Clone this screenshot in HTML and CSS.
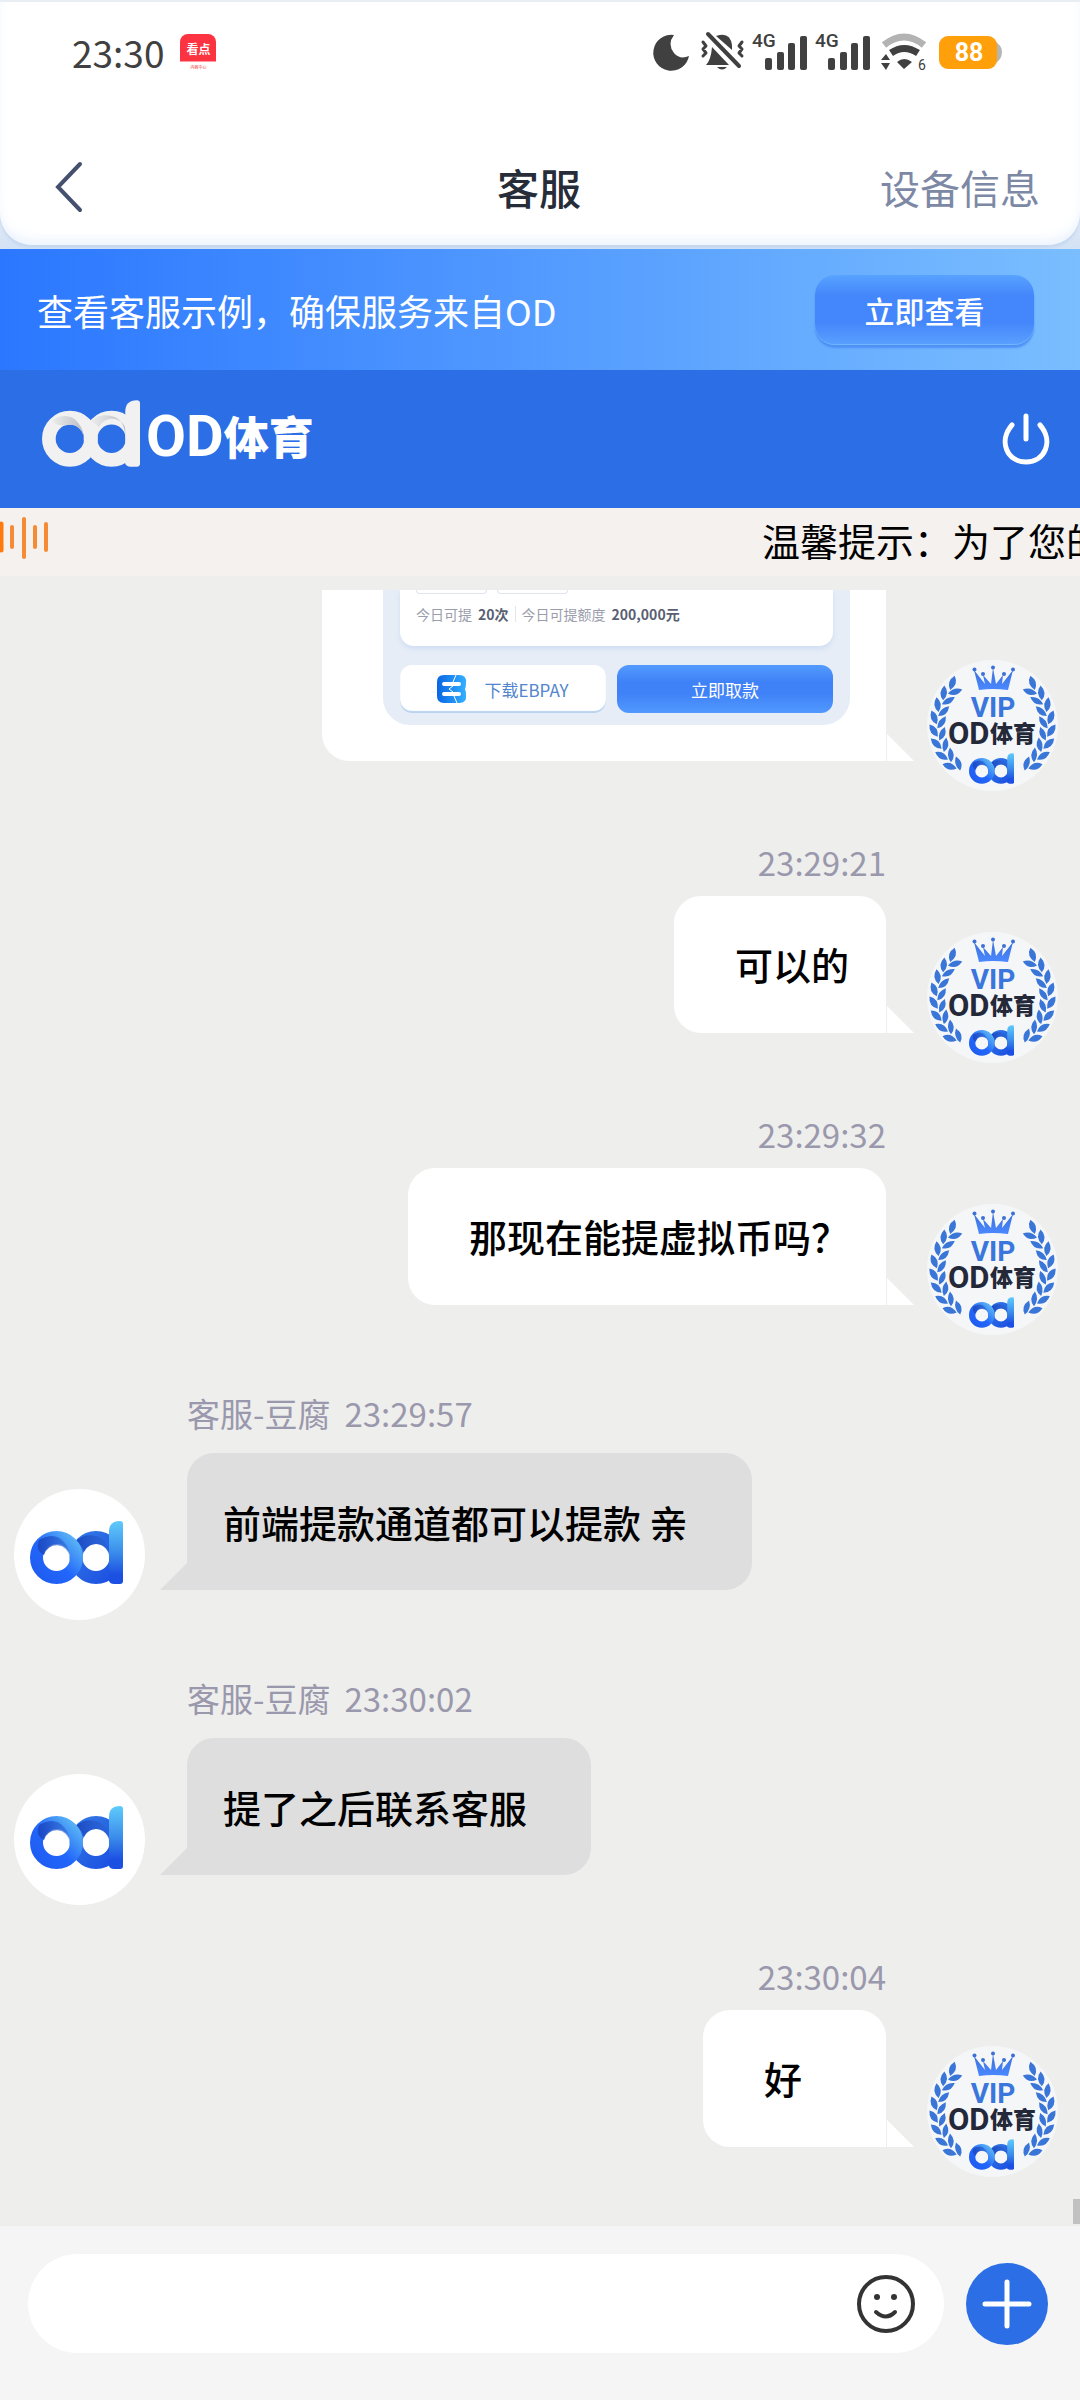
FILE: index.html
```html
<!DOCTYPE html>
<html lang="zh-CN">
<head>
<meta charset="utf-8">
<meta name="viewport" content="width=device-width">
<title>客服</title>
<link rel="stylesheet" href="styles.css">
</head>
<body>
<svg class="defs" width="0" height="0" aria-hidden="true">
  <defs>
    <linearGradient id="ring" x1="0" y1="1" x2="1" y2="0"><stop offset="0" stop-color="#1f5cf0"/><stop offset=".45" stop-color="#2266fb"/><stop offset="1" stop-color="#5db9f4"/></linearGradient>
    <linearGradient id="bowl" x1="0" y1="0" x2="1" y2="1"><stop offset="0" stop-color="#3277e4"/><stop offset="1" stop-color="#1c50e2"/></linearGradient>
    <linearGradient id="stem" x1="0" y1="0" x2="0" y2="1"><stop offset="0" stop-color="#5fcbfb"/><stop offset=".5" stop-color="#3a8cea"/><stop offset=".85" stop-color="#1c50e2"/></linearGradient>
    <linearGradient id="fold" x1="0" y1="0" x2="1" y2="0"><stop offset="0" stop-color="#1c49c4"/><stop offset="1" stop-color="#2a62d0" stop-opacity=".5"/></linearGradient>
    <linearGradient id="fold-light" x1="0" y1="0" x2="1" y2="0"><stop offset="0" stop-color="#ededed"/><stop offset="1" stop-color="#b9bdc5"/></linearGradient>
    <linearGradient id="crown" x1="0" y1="0" x2="0" y2="1"><stop offset="0" stop-color="#3a70d8"/><stop offset="1" stop-color="#4b88ff"/></linearGradient>
    <linearGradient id="eb" x1="0" y1="0" x2="1" y2="0"><stop offset="0" stop-color="#0a66e4"/><stop offset="1" stop-color="#33b0ff"/></linearGradient>
  </defs>
  <symbol id="od" viewBox="0 0 93 63">
    <circle cx="66" cy="36.500" r="20" fill="none" stroke="url(#bowl)" stroke-width="13"/>
    <path d="M46 20Q54 12 66 15Q79 18 79 36A13 13 0 0 0 54 31Q52 24 46 20Z" fill="url(#fold)"/>
    <path d="M79 11Q79 0 90 0Q93 0 93 3V60Q93 63 90 63H84Q80 63 79 60Z" fill="url(#stem)"/>
    <circle cx="26.500" cy="36.500" r="20" fill="none" stroke="url(#ring)" stroke-width="13"/>
    <path d="M9 19Q25 10 34 21Q40 28 39.500 36A13 13 0 0 0 14 34Q5 30 9 19Z" fill="url(#fold)"/>
  </symbol>
  <symbol id="od-light" viewBox="0 0 93 63">
    <circle cx="66" cy="36.500" r="20" fill="none" stroke="#f1f1f1" stroke-width="13"/>
    <path d="M46 20Q54 12 66 15Q79 18 79 36A13 13 0 0 0 54 26Q52 22 46 20Z" fill="url(#fold-light)"/>
    <path d="M79 11Q79 0 90 0Q93 0 93 3V60Q93 63 90 63H84Q80 63 79 60Z" fill="#f1f1f1"/>
    <circle cx="26.500" cy="36.500" r="20" fill="none" stroke="#f1f1f1" stroke-width="13"/>
    <path d="M9 19Q25 10 34 21Q40 28 39.500 36A13 13 0 0 0 22 24Q12 24 9 19Z" fill="url(#fold-light)"/>
  </symbol>
  <symbol id="leaves" viewBox="0 0 131 131">
    <path d="M10 71Q1 68 3 58Q12 61 10 71ZM11 75Q10 66 18 62Q20 72 11 75Z" fill="#3a76d8"/>
  </symbol>
  <symbol id="laurel" viewBox="0 0 131 131">
    <use href="#leaves" width="131" height="131" transform="rotate(46 65 66)"/>
    <use href="#leaves" width="131" height="131" transform="rotate(33 65 66)"/>
    <use href="#leaves" width="131" height="131" transform="rotate(20 65 66)"/>
    <use href="#leaves" width="131" height="131" transform="rotate(7 65 66)"/>
    <use href="#leaves" width="131" height="131" transform="rotate(-6 65 66)"/>
    <use href="#leaves" width="131" height="131" transform="rotate(-19 65 66)"/>
    <use href="#leaves" width="131" height="131" transform="rotate(-32 65 66)"/>
    <use href="#leaves" width="131" height="131" transform="rotate(-45 65 66)"/>
  </symbol>
  <symbol id="vip" viewBox="0 0 131 131">
    <circle cx="65.500" cy="65.500" r="65.500" fill="#f5f6f8"/>
    <use href="#laurel" width="131" height="131"/>
    <use href="#laurel" width="131" height="131" transform="translate(131 0) scale(-1 1)"/>
    <path d="M52 30L47 10L58 24L56 15L64 24L66 8L69 24L76 15L75 24L86 10L81 30Q66 28 52 30Z" fill="url(#crown)"/>
    <g fill="#3a70d8"><circle cx="47.500" cy="9.500" r="2"/><circle cx="56" cy="14" r="2"/><circle cx="66" cy="7.500" r="2"/><circle cx="77" cy="14" r="2"/><circle cx="86" cy="9.500" r="2"/></g>
    <use href="#od" x="42" y="93" width="45" height="31"/>
  </symbol>
  <symbol id="bars" viewBox="0 0 55 40">
    <g fill="#404040"><rect x="13" y="26" width="7" height="12" rx="2"/><rect x="25" y="20" width="7" height="18" rx="2"/><rect x="36" y="11" width="7" height="27" rx="2"/><rect x="48" y="4" width="7" height="34" rx="2"/></g>
  </symbol>
</svg>

<header class="top">
  <div class="top-card">
    <div class="status">
      <div class="status-left">
        <span class="clock">23:30</span>
        <span class="app"><span class="app-name">看点</span><span class="app-sub">内容中心</span></span>
      </div>
      <div class="status-right">
        <svg width="37" height="40" viewBox="0 0 37 40"><path d="M19 3A18 18 0 1 0 34 24Q25 28 19 21Q12 12 19 3Z" fill="#404040"/></svg>
        <svg width="44" height="40" viewBox="0 0 44 40"><path d="M12 15L29 33H6Q11 28 12 15ZM16 4Q30 -1 32 13V18Z" fill="#404040"/><path d="M17 35H27Q22 40 17 35Z" fill="#404040"/><path d="M8 2L39 34" fill="none" stroke="#404040" stroke-width="4" stroke-linecap="round"/><path d="M3 10L6 14L3 17L6 21L3 24M42 10L39 14L42 17L39 21L42 24" fill="none" stroke="#404040" stroke-width="3" stroke-linejoin="round" stroke-linecap="round"/></svg>
        <svg width="55" height="40"><use href="#bars"/><text class="net" x="0" y="15">4G</text></svg>
        <svg width="55" height="40"><use href="#bars"/><text class="net" x="0" y="15">4G</text></svg>
        <svg width="53" height="40" viewBox="-3 0 53 40"><path d="M3 13Q23 -3 43 13" fill="none" stroke="#b3b3b3" stroke-width="7"/><path d="M10 21Q23 12 37 21" fill="none" stroke="#404040" stroke-width="7"/><path d="M16 30Q23 24 31 30L23 37ZM0 28L5 22L9 28ZM0 31H9L5 38Z" fill="#404040"/><text class="wifi-gen" x="37" y="38">6</text></svg>
        <svg width="63" height="40" viewBox="0 0 63 40"><path d="M55 9Q63 13 63 20Q63 28 55 32Z" fill="#b5b5b5"/><rect x="0" y="4" width="58" height="33" rx="9" fill="#ff9f0a"/><text class="battery" x="30" y="29" text-anchor="middle">88</text></svg>
      </div>
    </div>
    <nav class="nav">
      <button class="back" aria-label="返回"><svg width="30" height="52" viewBox="0 0 30 52"><path d="M26 3L4 26L26 49" fill="none" stroke="#454f6e" stroke-width="4" stroke-linecap="round"/></svg></button>
      <h1 class="title">客服</h1>
      <a class="device" href="#device">设备信息</a>
    </nav>
  </div>
</header>

<div class="banner">
  <span>查看客服示例，确保服务来自OD</span>
  <button class="view">立即查看</button>
</div>

<div class="brand">
  <div class="logo">
    <svg width="98" height="67"><use href="#od-light"/></svg>
    <span class="logo-latin">OD</span><span class="logo-han">体育</span>
  </div>
  <button class="power" aria-label="退出"><svg width="50" height="54" viewBox="0 0 50 54"><path d="M25 4V27M11 13C-3 29 6 50 25 50S53 29 39 13" fill="none" stroke="#fff" stroke-width="5" stroke-linecap="round"/></svg></button>
</div>

<div class="notice">
  <svg width="50" height="44" viewBox="0 0 50 44"><path d="M1 8V34" stroke="#ff7a0c" stroke-width="5" stroke-linecap="round"/><path d="M12 11V31M24 3V41M35 11V31M46 8V34" stroke="#f68b36" stroke-width="4" stroke-linecap="round"/></svg>
  <span class="notice-text">温馨提示：为了您的</span>
</div>

<main class="chat">
  <article class="msg mine first">
    <div class="bubble shot">
      <div class="sheet">
        <div class="panel">
          <div class="chips"><i></i><i></i></div>
          <p class="quota"><span>今日可提</span><b>20次</b><i></i><span>今日可提额度</span><b>200,000元</b></p>
        </div>
        <div class="actions">
          <button class="download"><svg width="30" height="28" viewBox="0 0 30 28"><path d="M7 0H22Q30 0 29 8Q29 12 28 14Q29 16 29 20Q30 28 22 28H7Q0 28 0 21V7Q0 0 7 0Z" fill="url(#eb)"/><path d="M7 9H22M7 19H22" stroke="#fff" stroke-width="4" stroke-linecap="round"/><path d="M19 0L16 7M16 11L12 14L16 17M17 21L20 28" fill="none" stroke="#fff" stroke-width="1"/></svg>下载EBPAY</button>
          <button class="withdraw">立即取款</button>
        </div>
      </div>
    </div>
    <svg class="avatar"><use href="#vip"/><text class="vip-word" x="66" y="57" text-anchor="middle">VIP</text><text class="vip-latin" x="21" y="84">OD</text><text class="vip-han" x="63" y="82">体育</text></svg>
  </article>

  <article class="msg mine">
    <time class="meta">23:29:21</time>
    <p class="bubble">可以的</p>
    <svg class="avatar"><use href="#vip"/><text class="vip-word" x="66" y="57" text-anchor="middle">VIP</text><text class="vip-latin" x="21" y="84">OD</text><text class="vip-han" x="63" y="82">体育</text></svg>
  </article>

  <article class="msg mine">
    <time class="meta">23:29:32</time>
    <p class="bubble">那现在能提虚拟币吗？</p>
    <svg class="avatar"><use href="#vip"/><text class="vip-word" x="66" y="57" text-anchor="middle">VIP</text><text class="vip-latin" x="21" y="84">OD</text><text class="vip-han" x="63" y="82">体育</text></svg>
  </article>

  <article class="msg agent">
    <div class="meta"><span>客服-豆腐</span><time>23:29:57</time></div>
    <p class="bubble">前端提款通道都可以提款 亲</p>
    <div class="avatar"><svg width="93" height="63"><use href="#od"/></svg></div>
  </article>

  <article class="msg agent">
    <div class="meta"><span>客服-豆腐</span><time>23:30:02</time></div>
    <p class="bubble">提了之后联系客服</p>
    <div class="avatar"><svg width="93" height="63"><use href="#od"/></svg></div>
  </article>

  <article class="msg mine">
    <time class="meta">23:30:04</time>
    <p class="bubble">好</p>
    <svg class="avatar"><use href="#vip"/><text class="vip-word" x="66" y="57" text-anchor="middle">VIP</text><text class="vip-latin" x="21" y="84">OD</text><text class="vip-han" x="63" y="82">体育</text></svg>
  </article>
  <span class="thumb"></span>
</main>

<footer class="composer">
  <div class="field">
    <input type="text" aria-label="输入消息">
    <button class="emoji" aria-label="表情"><svg width="58" height="58" viewBox="0 0 58 58"><circle cx="29" cy="29" r="27" fill="none" stroke="#333" stroke-width="4"/><circle cx="20" cy="22" r="3" fill="#333"/><circle cx="37" cy="22" r="3" fill="#333"/><path d="M19 37Q29 46 38 37" fill="none" stroke="#333" stroke-width="4" stroke-linecap="round"/></svg></button>
  </div>
  <button class="add" aria-label="更多"><svg width="50" height="50" viewBox="0 0 50 50"><path d="M25 3V47M3 25H47" stroke="#fff" stroke-width="5" stroke-linecap="round"/></svg></button>
</footer>
</body>
</html>
```
FILE: styles.css
```css
* { box-sizing: border-box; }

body {
  margin: 0;
  min-height: 100vh;
  display: flex;
  flex-direction: column;
  background: #eeeeec;
  font-family: "Noto Sans CJK SC", sans-serif;
  overflow-x: hidden;
}

button {
  border: 0;
  padding: 0;
  background: none;
  font-family: inherit;
}

svg { display: block; flex: none; }
p, h1 { margin: 0; }
i { font-style: normal; }
.defs { position: absolute; }

/* status bar and title */
.top {
  background: linear-gradient(#e8eef4 0 80%, #d3e2f5);
  padding: 2px 0 4px;
}

.top-card {
  background: #fff;
  border-radius: 0 0 32px 32px;
  box-shadow: inset 0 -8px 14px -4px #e8f1fd, 0 3px 3px #c5d8f0;
}

.status {
  height: 100px;
  padding: 0 78px 0 72px;
  display: flex;
  align-items: center;
  justify-content: space-between;
}

.status-left { display: flex; align-items: center; gap: 16px; }
.status-right { display: flex; align-items: center; gap: 8px; }
.clock { font-size: 37px; line-height: 52px; color: #404040; }

.app {
  width: 36px;
  height: 36px;
  border-radius: 8px;
  background: linear-gradient(#fc3340 0 27px, #fff 28px);
  display: flex;
  flex-direction: column;
  align-items: center;
}

.app-name { font-size: 12px; line-height: 30px; font-weight: 700; color: #fff; }
.app-sub { font-size: 4px; line-height: 6px; color: #e33; white-space: nowrap; }
.net { font: 500 19px Roboto, sans-serif; fill: #404040; }
.wifi-gen { font: 14px Roboto, sans-serif; fill: #404040; }
.battery { font: 700 25px Roboto, sans-serif; fill: #fff; }

.status-right svg { overflow: visible; }

.nav {
  margin-top: 27px;
  height: 116px;
  padding: 0 40px 0 54px;
  display: flex;
  align-items: center;
}

.back { width: 144px; }
.title { flex: 1; text-align: center; font-size: 42px; line-height: 60px; font-weight: 500; color: #262c38; }
.device { font-size: 40px; line-height: 60px; color: #7d88a5; text-decoration: none; }

/* blue bars */
.banner {
  height: 121px;
  padding: 0 46px 0 37px;
  display: flex;
  align-items: center;
  justify-content: space-between;
  background: linear-gradient(90deg, #2b77ff, #7abeff);
  color: #fff;
  font-size: 36px;
}

.view {
  width: 219px;
  height: 69px;
  border-radius: 20px;
  background: linear-gradient(#58a2ff, #4486fb 30%, #4486fb 68%, #599ffe);
  box-shadow: 0 1px 0 #72b5ff, 0 4px 2px #4e91f5;
  color: #fff;
  font-size: 30px;
  font-weight: 500;
}

.brand {
  height: 138px;
  padding: 0 29px 0 42px;
  display: flex;
  align-items: center;
  justify-content: space-between;
  background: #2b6ee6;
}

.logo { display: flex; align-items: center; margin-bottom: 6px; color: #fff; }
.logo svg { margin-bottom: 6px; }
.logo-latin { margin-left: 6px; font: 700 58px/70px Roboto, sans-serif; }
.logo-han { font-size: 45px; line-height: 70px; font-weight: 900; }

.notice {
  height: 68px;
  display: flex;
  align-items: center;
  justify-content: space-between;
  background: #f5f1ee;
  overflow: hidden;
}

.notice svg { margin-bottom: 8px; }
.notice-text { flex: none; width: 318px; white-space: nowrap; font-size: 38px; line-height: 64px; margin-bottom: 4px; color: #000; }

/* conversation */
.chat {
  flex: 1;
  position: relative;
  padding: 14px 22px 79px 14px;
}

.msg { display: grid; column-gap: 42px; }

.mine {
  grid-template-columns: 1fr 131px;
  justify-items: end;
  column-gap: 41px;
  margin-top: 77px;
}

.agent {
  grid-template-columns: 131px 1fr;
  justify-items: start;
  margin-top: 84px;
}

.meta { font-size: 33px; line-height: 48px; color: #9a98ac; }
.mine .meta { grid-column: 1; margin-bottom: 10px; }
.agent .meta { grid-column: 2; margin-bottom: 16px; display: flex; gap: 14px; }

.bubble {
  position: relative;
  min-width: 183px;
  border-radius: 27px;
  font-size: 38px;
  line-height: 57px;
  font-weight: 500;
  color: #000;
}

.mine .bubble {
  grid-column: 1;
  grid-row: 2;
  padding: 39px 37px 41px 61px;
  border-bottom-right-radius: 0;
  background: #fff;
}

.agent .bubble {
  grid-column: 2;
  grid-row: 2;
  padding: 40px 64px 40px 36px;
  border-bottom-left-radius: 0;
  background: #dedede;
}

.bubble::after {
  content: "";
  position: absolute;
  bottom: 0;
  width: 27px;
  height: 27px;
}

.mine .bubble::after { left: calc(100% + 1px); background: #fff; clip-path: polygon(0 0, 100% 100%, 0 100%); }
.agent .bubble::after { right: 100%; background: #dedede; clip-path: polygon(100% 0, 100% 100%, 0 100%); }

.avatar {
  grid-row: 2;
  align-self: end;
  width: 131px;
  height: 131px;
  margin-bottom: -30px;
}

.mine .avatar { grid-column: 2; }

.agent .avatar {
  grid-column: 1;
  padding: 0 6px 4px 0;
  border-radius: 50%;
  background: #fff;
  display: flex;
  align-items: center;
  justify-content: center;
}

.vip-word { font: 700 28px Roboto, sans-serif; fill: #3a76dc; }
.vip-latin { font: 700 31px Roboto, sans-serif; fill: #24293a; }
.vip-han { font: 900 23px "Noto Sans CJK SC", sans-serif; fill: #24293a; }

/* screenshot sent as the first message */
.first { margin-top: 0; }

.first .shot {
  width: 564px;
  padding: 0 36px 36px 61px;
  border-radius: 0 0 0 27px;
}

.sheet { padding: 0 17px 12px; border-radius: 0 0 27px 27px; background: #e6edf7; }

.panel {
  height: 56px;
  padding: 0 16px;
  border-radius: 0 0 14px 14px;
  background: #fff;
  box-shadow: 0 3px 5px #d0def2;
}

.chips { display: flex; gap: 10px; }
.chips i { width: 71px; height: 4px; border: 1px solid #dfe5ee; border-top: 0; border-radius: 0 0 8px 8px; }

.quota {
  display: flex;
  align-items: center;
  gap: 6px;
  font-size: 14px;
  line-height: 40px;
  font-weight: 400;
  color: #9a9dab;
  white-space: nowrap;
}

.quota b { color: #596072; }
.quota i { width: 1px; height: 16px; background: #e4e6ec; }

.actions { margin-top: 19px; display: grid; grid-template-columns: 206px 216px; justify-content: space-between; }
.actions button { height: 48px; border-radius: 12px; font-size: 17px; }

.download {
  display: flex;
  align-items: center;
  justify-content: center;
  gap: 17px;
  background: #fff;
  box-shadow: inset 0 -2px 1px #b8d2f0;
  color: #5285cc;
}

.withdraw { background: linear-gradient(#539bff, #3f82f7 35%, #3f82f7 60%, #5299ff); color: #fff; }

.thumb { position: absolute; right: 0; bottom: 2px; width: 7px; height: 25px; background: #c1c1c1; }

/* message box */
.composer {
  padding: 28px 32px 47px 28px;
  display: flex;
  align-items: center;
  gap: 22px;
  background: #f5f5f5;
}

.field {
  flex: 1;
  height: 99px;
  padding: 0 29px 0 40px;
  border-radius: 50px;
  background: #fff;
  display: flex;
  align-items: center;
}

.field input { flex: 1; min-width: 0; height: 80px; border: 0; outline: 0; background: none; font: inherit; font-size: 38px; }

.add {
  width: 82px;
  height: 82px;
  border-radius: 50%;
  background: #2b6ee6;
  display: flex;
  align-items: center;
  justify-content: center;
}
```
